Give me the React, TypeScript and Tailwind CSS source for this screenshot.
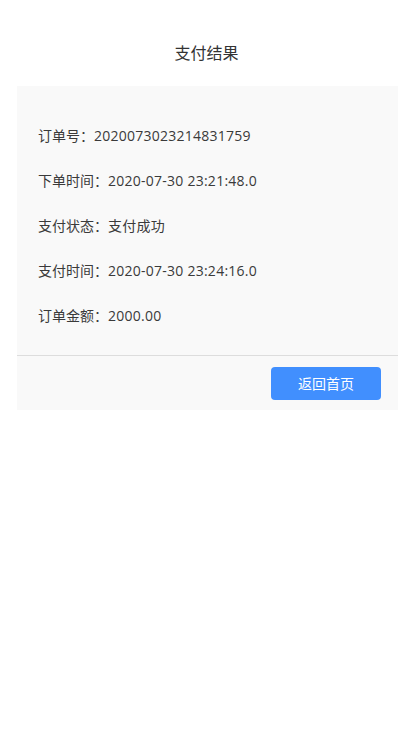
export default function App() {
  const rows = [
    ["订单号：", "2020073023214831759"],
    ["下单时间：", "2020-07-30 23:21:48.0"],
    ["支付状态：", "支付成功"],
    ["支付时间：", "2020-07-30 23:24:16.0"],
    ["订单金额：", "2000.00"],
  ];
  return (
    <div
      className="min-h-[735px] w-full bg-white text-[#333]"
      style={{ fontFamily: '"Open Sans", "Noto Sans CJK SC", sans-serif' }}
    >
      <div className="flex h-[86px] items-start justify-center pt-[43px]">
        <span className="text-[16px] leading-[20px] text-[#333]">支付结果</span>
      </div>
      <div className="ml-[17px] mr-[15px] bg-[#f9f9f9]">
        <div className="flex flex-col pt-[27px] pb-[17px] pl-[21px]">
          {rows.map(([k, v]) => (
            <div key={k} className="flex h-[45px] items-center text-[14px] text-[#3a3a3a]">
              <span>{k}</span>
              <span className="tracking-[0.25px]">{v}</span>
            </div>
          ))}
        </div>
        <div className="h-px bg-[#dddddd]" />
        <div className="flex justify-end pt-[11px] pb-[10px] pr-[17px]">
          <button className="flex h-[33px] w-[110px] items-center justify-center rounded-[4px] bg-[#418ffe] text-[14px] text-white">
            返回首页
          </button>
        </div>
      </div>
    </div>
  );
}
